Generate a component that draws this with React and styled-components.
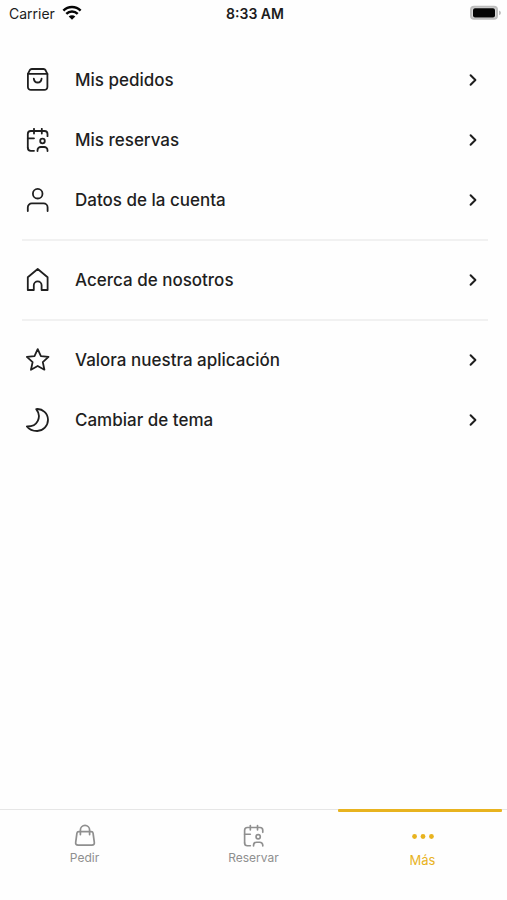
import React, { useState } from "react";

import styled, { createGlobalStyle } from "styled-components";

const GlobalStyle = createGlobalStyle`
  * {
    box-sizing: border-box;
  }

  body {
    margin: 0;
    background-color: #fefefe;
    font-family: Inter, "Liberation Sans", sans-serif;
  }
`;

const Screen = styled.div`
  min-height: 100vh;
  display: flex;
  flex-direction: column;
`;

const StatusBar = styled.header`
  display: grid;
  grid-template-columns: 1fr auto 1fr;
  align-items: center;
  height: 26px;
  padding: 0 6px 0 9px;
  font-size: 14px;
  color: #1c1c1c;
`;

const Carrier = styled.div`
  display: flex;
  align-items: center;
  gap: 7px;
`;

const Time = styled.div`
  font-weight: 600;
`;

const Battery = styled.svg`
  justify-self: end;
`;

const Menu = styled.main`
  flex: 1;
  padding: 24px 19px 0 22px;
`;

const Group = styled.section`
  & + & {
    margin-top: 9px;
    padding-top: 9px;
    border-top: 2px solid #f1f1f1;
  }
`;

const MenuItem = styled.button`
  width: 100%;
  height: 60px;
  display: flex;
  align-items: center;
  gap: 25px;
  padding: 0 8px 0 4px;
  border: none;
  background: none;
  color: #1f1f1f;
  font-family: inherit;
  font-size: 17px;
  font-weight: 500;
  text-align: left;
  cursor: pointer;
`;

const Label = styled.span`
  flex: 1;
`;

const LineIcon = styled.svg`
  width: 24px;
  height: 24px;
  fill: none;
  stroke: currentColor;
  stroke-width: ${(props) => props.$weight || 1.8};
  stroke-linecap: round;
  stroke-linejoin: round;
`;

const Chevron = styled(LineIcon)`
  width: 14px;
  height: 14px;
`;

const TabBar = styled.nav`
  display: grid;
  grid-template-columns: repeat(3, 1fr);
  height: 91px;
  border-top: 1px solid #e6e6e6;
`;

const Tab = styled.button`
  position: relative;
  display: flex;
  flex-direction: column;
  align-items: center;
  gap: ${(props) => (props.$active ? 4 : 2)}px;
  padding: 14px 0 0;
  border: none;
  background: none;
  color: ${(props) => (props.$active ? "#e8b31f" : "#8f8f8f")};
  font-family: inherit;
  font-size: ${(props) => (props.$active ? 13 : 12)}px;
  line-height: 16px;
  cursor: pointer;

  /* marker that overlaps the border of the bar */
  &::before {
    content: "";
    display: ${(props) => (props.$active ? "block" : "none")};
    position: absolute;
    top: -1px;
    left: 0;
    right: 5px;
    height: 3px;
    border-radius: 1px;
    background-color: #e8b31f;
  }
`;

const CalendarPaths = () => (
  <>
    <path d="M1.8 19.8V6a3 3 0 0 1 3-3h13.7a3 3 0 0 1 3 3v2.2" />
    <path d="M8 .8v4.8M15.8.8v4.8M1.8 10.3H8M1.8 19.8a3 3 0 0 0 3 3H8" />
    <circle cx="16.5" cy="13" r="2.3" />
    <path d="M11.5 23v-.7a3.3 3.3 0 0 1 3.3-3.3h3.4a3.3 3.3 0 0 1 3.3 3.3v.7" />
  </>
);

const ICONS = {
  orders: (
    <>
      <path d="M1.9 5.9 3.7 2.3Q4.4 1 5.8 1h11.7q1.4 0 2.1 1.3l1.8 3.6v13a3 3 0 0 1-3 3H4.9a3 3 0 0 1-3-3Z" />
      <path d="M1.9 5.9h19.5M7.8 10.6c.6 5.2 7.2 5.2 7.8 0" />
    </>
  ),
  bookings: <CalendarPaths />,
  account: (
    <>
      <circle cx="11.7" cy="5.7" r="4.8" />
      <path d="M1.8 23v-3.6a4 4 0 0 1 4-4h11.8a4 4 0 0 1 4 4V23" />
    </>
  ),
  about: (
    <path d="M1.8 9.2 11.7 1l9.9 8.2V22h-6v-4.7a3.9 3.9 0 0 0-7.8 0V22h-6Z" />
  ),
  rate: (
    <path d="m11.7 1.1 3.2 7 7.6.8-5.7 5.2 1.6 7.600-6.700-3.700-6.700 3.700 1.600-7.600L.9 8.900l7.600-.8Z" />
  ),
  theme: (
    <path d="M10.2 1.1C16.7.3 22 5.5 22 11.8 22 18 17.2 23 11.2 23 6.8 23 3.1 21.4.9 18.5 6.5 18.6 10.1 16.3 11.8 12.8 13.7 8.9 13.1 4.7 10.2 1.1Z" />
  ),
};

const GROUPS = [
  [
    { icon: "orders", label: "Mis pedidos" },
    { icon: "bookings", label: "Mis reservas" },
    { icon: "account", label: "Datos de la cuenta" },
  ],
  [{ icon: "about", label: "Acerca de nosotros" }],
  [
    { icon: "rate", label: "Valora nuestra aplicación" },
    { icon: "theme", label: "Cambiar de tema" },
  ],
];

const TABS = [
  {
    label: "Pedir",
    icon: (
      <>
        <path d="M6 8h13q1.600 0 1.900 1.500l1.300 9.600q.4 2.900-2.500 2.900H5.300q-2.900 0-2.500-2.900l1.300-9.600Q4.400 8 6 8Z" />
        <path d="M7.700 11V6.300a4.800 4.800 0 0 1 9.600 0V11" />
      </>
    ),
  },
  {
    label: "Reservar",
    icon: (
      <g transform="translate(1 .8) scale(.96)">
        <CalendarPaths />
      </g>
    ),
  },
  {
    label: "Más",
    icon: (
      <g fill="currentColor" stroke="none">
        <circle cx="3.7" cy="13" r="2.5" />
        <circle cx="12.5" cy="13" r="2.5" />
        <circle cx="21.3" cy="13" r="2.5" />
      </g>
    ),
  },
];

const App = () => {
  const [activeTab, setActiveTab] = useState("Más");

  return (
    <Screen>
      <GlobalStyle />
      <StatusBar>
        <Carrier>
          Carrier
          <svg width="20" height="16" viewBox="0 0 20 16" fill="none">
            <g stroke="#050505" strokeWidth="2.5">
              <path d="M1.4 5.6a12.3 12.3 0 0 1 17.2 0" />
              <path d="M4.3 8.9a8.2 8.2 0 0 1 11.4 0" />
            </g>
            <path
              d="M10 14.8 6.7 11.5a4.7 4.7 0 0 1 6.6 0Z"
              fill="#050505"
            />
          </svg>
        </Carrier>
        <Time>8:33 AM</Time>
        <Battery width="31" height="16" viewBox="0 0 31 16">
          <rect x="0" y=".8" width="28" height="14" rx="4" fill="#bdbdbd" />
          <rect x="2" y="2.6" width="24" height="10.4" rx="2.5" fill="#d8d8d8" />
          <rect x="3" y="3.2" width="22" height="9.2" rx="2" fill="#050505" />
          <path d="M29 5.400q2 .8 2 2.400t-2 2.400Z" fill="#bdbdbd" />
        </Battery>
      </StatusBar>

      <Menu>
        {GROUPS.map((group, index) => (
          <Group key={index}>
            {group.map((item) => (
              <MenuItem key={item.label} type="button">
                <LineIcon viewBox="0 0 24 24">{ICONS[item.icon]}</LineIcon>
                <Label>{item.label}</Label>
                <Chevron viewBox="0 0 14 14" $weight={2}>
                  <path d="m4.600 2.200 4.800 4.800-4.800 4.800" />
                </Chevron>
              </MenuItem>
            ))}
          </Group>
        ))}
      </Menu>

      <TabBar>
        {TABS.map((tab) => (
          <Tab
            key={tab.label}
            type="button"
            $active={tab.label === activeTab}
            onClick={() => setActiveTab(tab.label)}
          >
            <LineIcon viewBox="0 0 25 25">{tab.icon}</LineIcon>
            {tab.label}
          </Tab>
        ))}
      </TabBar>
    </Screen>
  );
};

export default App;
